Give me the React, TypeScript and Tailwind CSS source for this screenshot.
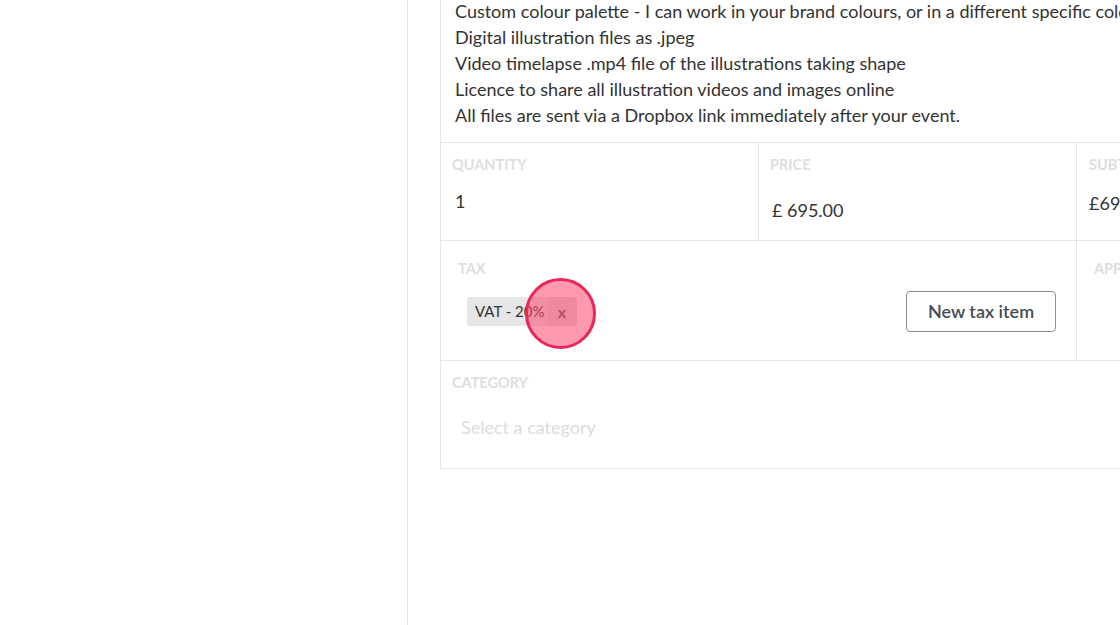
import React from "react";

const lines = [
  "Custom colour palette - I can work in your brand colours, or in a different specific colour scheme",
  "Digital illustration files as .jpeg",
  "Video timelapse .mp4 file of the illustrations taking shape",
  "Licence to share all illustration videos and images online",
  "All files are sent via a Dropbox link immediately after your event.",
];

function Label({ children, className = "" }: { children: React.ReactNode; className?: string }) {
  return (
    <div className={`text-[14.5px] font-bold uppercase leading-[16px] text-[#dedede] ${className}`}>
      {children}
    </div>
  );
}

export default function App() {
  return (
    <div
      className="flex h-[625px] w-[1120px] overflow-hidden bg-white text-[#333]"
      style={{ fontFamily: "Lato, 'Open Sans', sans-serif" }}
    >
      <div className="h-full w-[408px] shrink-0 border-r border-[#e6e6e6]" />
      <div className="pl-[32px]">
        <div className="relative -mt-[2px] w-[960px] border-x border-b border-[#e6e6e6]">
          <div className="whitespace-nowrap pb-[14px] pl-[14px] text-[18px] leading-[26px] text-[#333]">
            {lines.map((l) => (
              <div key={l}>{l}</div>
            ))}
          </div>
          <div className="grid grid-cols-[318px_318px_1fr] border-t border-[#e6e6e6]">
            <div className="h-[97px] border-r border-[#e6e6e6] pl-[11px] pt-[14px]">
              <Label>Quantity</Label>
              <div className="mt-[16px] pl-[3px] text-[18px] leading-[24px]">1</div>
            </div>
            <div className="h-[97px] border-r border-[#e6e6e6] pl-[11px] pt-[14px]">
              <Label>Price</Label>
              <div className="mt-[25px] pl-[2px] text-[18px] leading-[24px]">£ 695.00</div>
            </div>
            <div className="h-[97px] pl-[12px] pt-[14px]">
              <Label>Subtotal</Label>
              <div className="mt-[18px] text-[18px] leading-[24px]">£695.00</div>
            </div>
          </div>
          <div className="grid grid-cols-[636px_1fr] border-t border-[#e6e6e6]">
            <div className="relative h-[119px] border-r border-[#e6e6e6] pl-[17px] pt-[20px]">
              <Label>Tax</Label>
              <div className="mt-[14px] flex items-center justify-between pr-[20px]">
                <div className="ml-[9px] flex h-[29px] items-center overflow-hidden rounded-[3px] bg-[#e6e6e6]">
                  <span className="pl-[8px] pr-[3px] text-[15px] text-[#333]">VAT - 20%</span>
                  <span className="flex h-full w-[29px] items-center justify-center bg-[#dcdcdc] text-[16px] font-bold text-[#555]">
                    x
                  </span>
                </div>
                <button className="h-[41px] w-[150px] rounded-[4px] border border-[#8a8f96] bg-white text-[18px] font-semibold text-[#454b54]">
                  New tax item
                </button>
              </div>
              <div className="pointer-events-none absolute left-[84px] top-[37px] h-[71px] w-[71px] rounded-full border-[3px] border-[#e8275a] bg-[rgba(255,70,105,0.55)]" />
            </div>
            <div className="h-[119px] pl-[17px] pt-[20px]">
              <Label>Apply to</Label>
            </div>
          </div>
          <div className="h-[108px] border-t border-[#e6e6e6] pl-[11px] pt-[14px]">
            <Label>Category</Label>
            <div className="mt-[24px] pl-[9px] text-[18px] leading-[24px] text-[#dcdcdc]">Select a category</div>
          </div>
        </div>
      </div>
    </div>
  );
}
